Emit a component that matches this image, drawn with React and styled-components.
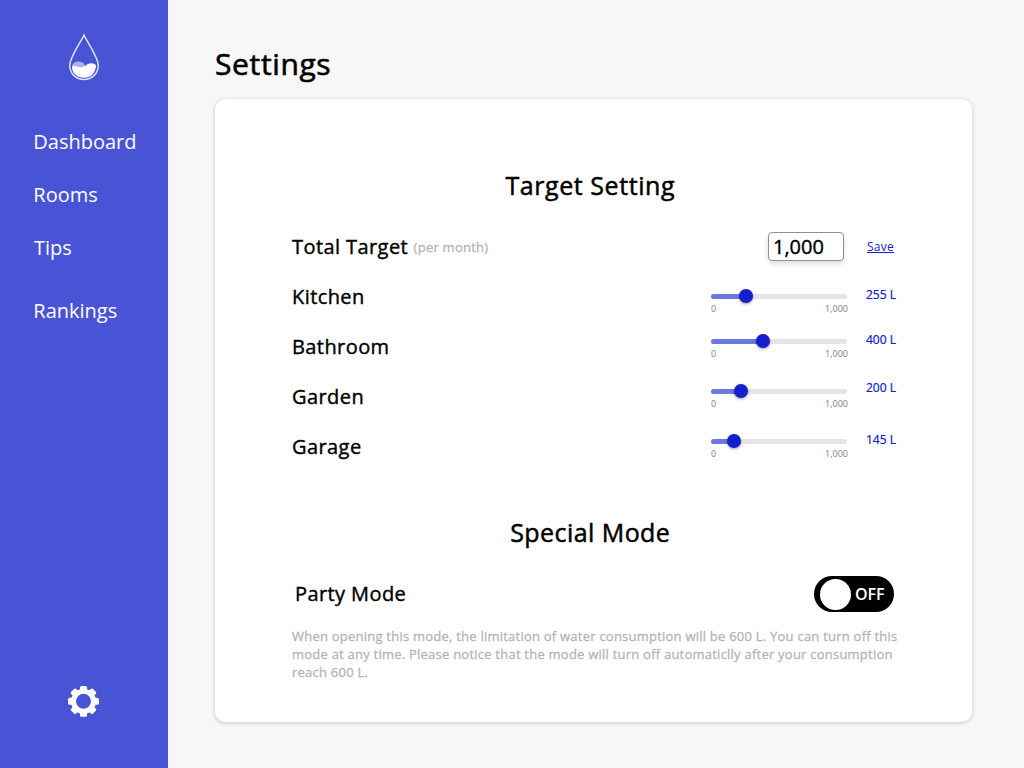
import React, { useState } from "react";
import styled, { createGlobalStyle, css } from "styled-components";

const GlobalStyle = createGlobalStyle`
  *, *::before, *::after { box-sizing: border-box; }
  body { margin: 0; background: #f7f7f7; color: #000; font-family: "Open Sans", "Noto Sans", sans-serif; }
`;

/* A medium weight: regular letterforms with a fine outline. */
const mediumText = css`
  font-weight: 400;
  -webkit-text-stroke: 0.02em currentColor;
`;

const Page = styled.div`
  display: flex;
  width: 1024px;
  height: 768px;
  overflow: hidden;
  background: #f7f7f7;
`;

const Sidebar = styled.aside`
  display: flex;
  flex-direction: column;
  align-items: center;
  flex: none;
  width: 168px;
  padding: 33px 0 51px;
  background: #4853d6;
`;

const Logo = styled.svg`
  display: block;
  width: 32px;
  height: 48px;
`;

const Nav = styled.nav`
  display: flex;
  flex-direction: column;
  align-self: stretch;
  gap: 25px;
  margin-top: 47px;
  padding-left: 33.3px;
`;

const NavLink = styled.a`
  margin-top: ${(p) => p.$offset || 0}px;
  padding-left: ${(p) => p.$indent || 0}px;
  color: #fff;
  font-size: 20px;
  line-height: 28px;
`;

const GearIcon = styled.svg`
  display: block;
  width: 32px;
  height: 32px;
  margin-top: auto;
`;

const Main = styled.main`
  flex: 1;
  min-width: 0;
  padding: 44px 52px 0 47px;
`;

const PageTitle = styled.h1`
  margin: 0 0 15px;
  font-size: 30px;
  line-height: 40px;
  letter-spacing: 0.021em;
  ${mediumText}
`;

const Card = styled.section`
  height: 623px;
  padding: 66px 75px 0 77px;
  border-radius: 10px;
  background: #fff;
  box-shadow: 0 1px 4px rgba(0, 0, 0, 0.2);
`;

const SectionTitle = styled.h2`
  margin: ${(p) => p.$top || 0}px 0 0;
  padding-right: 8.5px;
  text-align: center;
  font-size: 25px;
  line-height: 40px;
  letter-spacing: ${(p) => p.$spacing}px;
  ${mediumText}
`;

const TargetList = styled.div`
  padding-top: 16px;
`;

const Row = styled.div`
  display: grid;
  grid-template-columns: 1fr 136px 31px;
  column-gap: 19px;
  width: 605px;
  height: 50px;
`;

const Label = styled.div`
  display: flex;
  font-size: 20px;
  line-height: 52px;
  letter-spacing: 0.021em;
  white-space: nowrap;
  ${mediumText}
`;

const Hint = styled.span`
  margin-left: 5.5px;
  color: #b3b3b3;
  font-size: 13px;
  letter-spacing: 0.019em;
  ${mediumText}
`;

const TotalInput = styled.input`
  justify-self: end;
  width: 76px;
  height: 29px;
  margin: 11px 3px 0 0;
  padding: 0 4px;
  border: 1px solid #8f8f8f;
  border-radius: 4px;
  background: #fff;
  box-shadow: 0 3px 5px rgba(0, 0, 0, 0.13);
  font: 400 20px/27px "Open Sans", sans-serif;
  outline: none;
  ${mediumText}
`;

const SaveLink = styled.a`
  margin-left: 1px;
  color: #1420cc;
  font-size: 12px;
  line-height: 51px;
  letter-spacing: 0.02em;
  text-decoration: underline;
`;

const Slider = styled.div`
  padding-top: ${(p) => p.$top}px;
`;

const Track = styled.div`
  display: flex;
  align-items: center;
  height: 5px;
  border-radius: 3px;
  background: #e4e5e4;
`;

const Fill = styled.div`
  height: 5px;
  border-radius: 3px 0 0 3px;
  background: #6e78db;
`;

const Thumb = styled.div`
  flex: none;
  width: 14px;
  height: 14px;
  margin: -1px 0 0 -7px;
  border-radius: 50%;
  background: #1420cc;
  box-shadow: 0 1px 3px rgba(0, 0, 0, 0.4);
`;

const Scale = styled.div`
  display: flex;
  justify-content: space-between;
  width: 137px;
  margin-top: 3px;
  color: #7e7e7e;
  font-size: 9px;
  line-height: 13px;
`;

const Amount = styled.div`
  padding-top: ${(p) => p.$top}px;
  color: #1420cc;
  font-size: 12px;
  line-height: 16px;
  white-space: nowrap;
  ${mediumText}
`;

const ModeRow = styled.div`
  display: flex;
  align-items: center;
  justify-content: space-between;
  width: 602px;
  height: 36px;
  margin-top: 24px;
  padding-left: 3px;
`;

const ModeLabel = styled.div`
  font-size: 20px;
  line-height: 36px;
  letter-spacing: 0.02em;
  ${mediumText}
`;

const Toggle = styled.button`
  display: flex;
  align-items: center;
  gap: 4px;
  width: 80px;
  height: 36px;
  padding: 0 0 0 6px;
  border: 0;
  border-radius: 18px;
  background: #000;
  color: #fff;
  font: 600 16px/36px "Open Sans", sans-serif;
`;

const Knob = styled.span`
  width: 31px;
  height: 31px;
  margin-top: 1px;
  border-radius: 50%;
  background: #fff;
`;

const Note = styled.p`
  margin: 15px 0 0;
  color: #b3b3b3;
  font-size: 13px;
  line-height: 18px;
  letter-spacing: 0.0178em;
  white-space: nowrap;
  ${mediumText}
`;

const links = [
  { name: "Dashboard" },
  { name: "Rooms" },
  { name: "Tips", indent: 0.7 },
  { name: "Rankings", offset: 10 },
];

const rooms = [
  { name: "Kitchen", amount: 255, fill: 35, top: 23, amountTop: 16 },
  { name: "Bathroom", amount: 400, fill: 52, top: 18, amountTop: 11 },
  { name: "Garden", amount: 200, fill: 30, top: 18, amountTop: 9 },
  { name: "Garage", amount: 145, fill: 23, top: 18, amountTop: 11 },
];

const teeth = [0, 45, 90, 135, 180, 225, 270, 315];

export default function App() {
  const [total, setTotal] = useState("1,000");
  return (
    <>
      <GlobalStyle />
      <Page>
        <Sidebar>
          <Logo viewBox="0 0 32 48" fill="none">
            <path
              d="M16 2C13 9 1.7 24 1.7 32.4a14.3 14.1 0 0 0 28.6 0C30.3 24 19 9 16 2Z"
              stroke="#fff"
              strokeOpacity=".82"
              strokeWidth="1.5"
            />
            <path d="M4.500 31.500c2-3.500 7-4 11-1.500l2.500 4-9 2-5-3Z" fill="#fff" fillOpacity=".55" />
            <path d="M4 33.500c4-1.500 6 1.300 9.500.8 4.500-.8 5.500-4 9.500-4 2.200 0 4 .7 5 2-.2 8-5.500 12.500-12 12.500S3.700 40 4 33.500Z" fill="#fff" />
          </Logo>
          <Nav>
            {links.map((l) => (
              <NavLink key={l.name} $offset={l.offset} $indent={l.indent}>{l.name}</NavLink>
            ))}
          </Nav>
          <GearIcon viewBox="0 0 32 32">
            <circle cx="15.5" cy="16.3" r="10" fill="none" stroke="#fff" strokeWidth="5" />
            {teeth.map((a) => (
              <rect key={a} x="12" y="0.9" width="7" height="6" rx="1.5" fill="#fff" transform={`rotate(${a} 15.5 16.3)`} />
            ))}
          </GearIcon>
        </Sidebar>
        <Main>
          <PageTitle>Settings</PageTitle>
          <Card>
            <SectionTitle $spacing={0.57}>Target Setting</SectionTitle>
            <TargetList>
              <Row>
                <Label>Total Target<Hint>(per month)</Hint></Label>
                <TotalInput value={total} onChange={(e) => setTotal(e.target.value)} />
                <SaveLink>Save</SaveLink>
              </Row>
              {rooms.map((r) => (
                <Row key={r.name}>
                  <Label>{r.name}</Label>
                  <Slider $top={r.top}>
                    <Track>
                      <Fill style={{ width: r.fill }} />
                      <Thumb />
                    </Track>
                    <Scale><span>0</span><span>1,000</span></Scale>
                  </Slider>
                  <Amount $top={r.amountTop}>{r.amount} L</Amount>
                </Row>
              ))}
            </TargetList>
            <SectionTitle $top={41} $spacing={0.44}>Special Mode</SectionTitle>
            <ModeRow>
              <ModeLabel>Party Mode</ModeLabel>
              <Toggle><Knob />OFF</Toggle>
            </ModeRow>
            <Note>
              When opening this mode, the limitation of water consumption will be 600 L. You can turn off this<br />
              mode at any time. Please notice that the mode will turn off automaticlly after your consumption<br />
              reach 600 L.
            </Note>
          </Card>
        </Main>
      </Page>
    </>
  );
}
